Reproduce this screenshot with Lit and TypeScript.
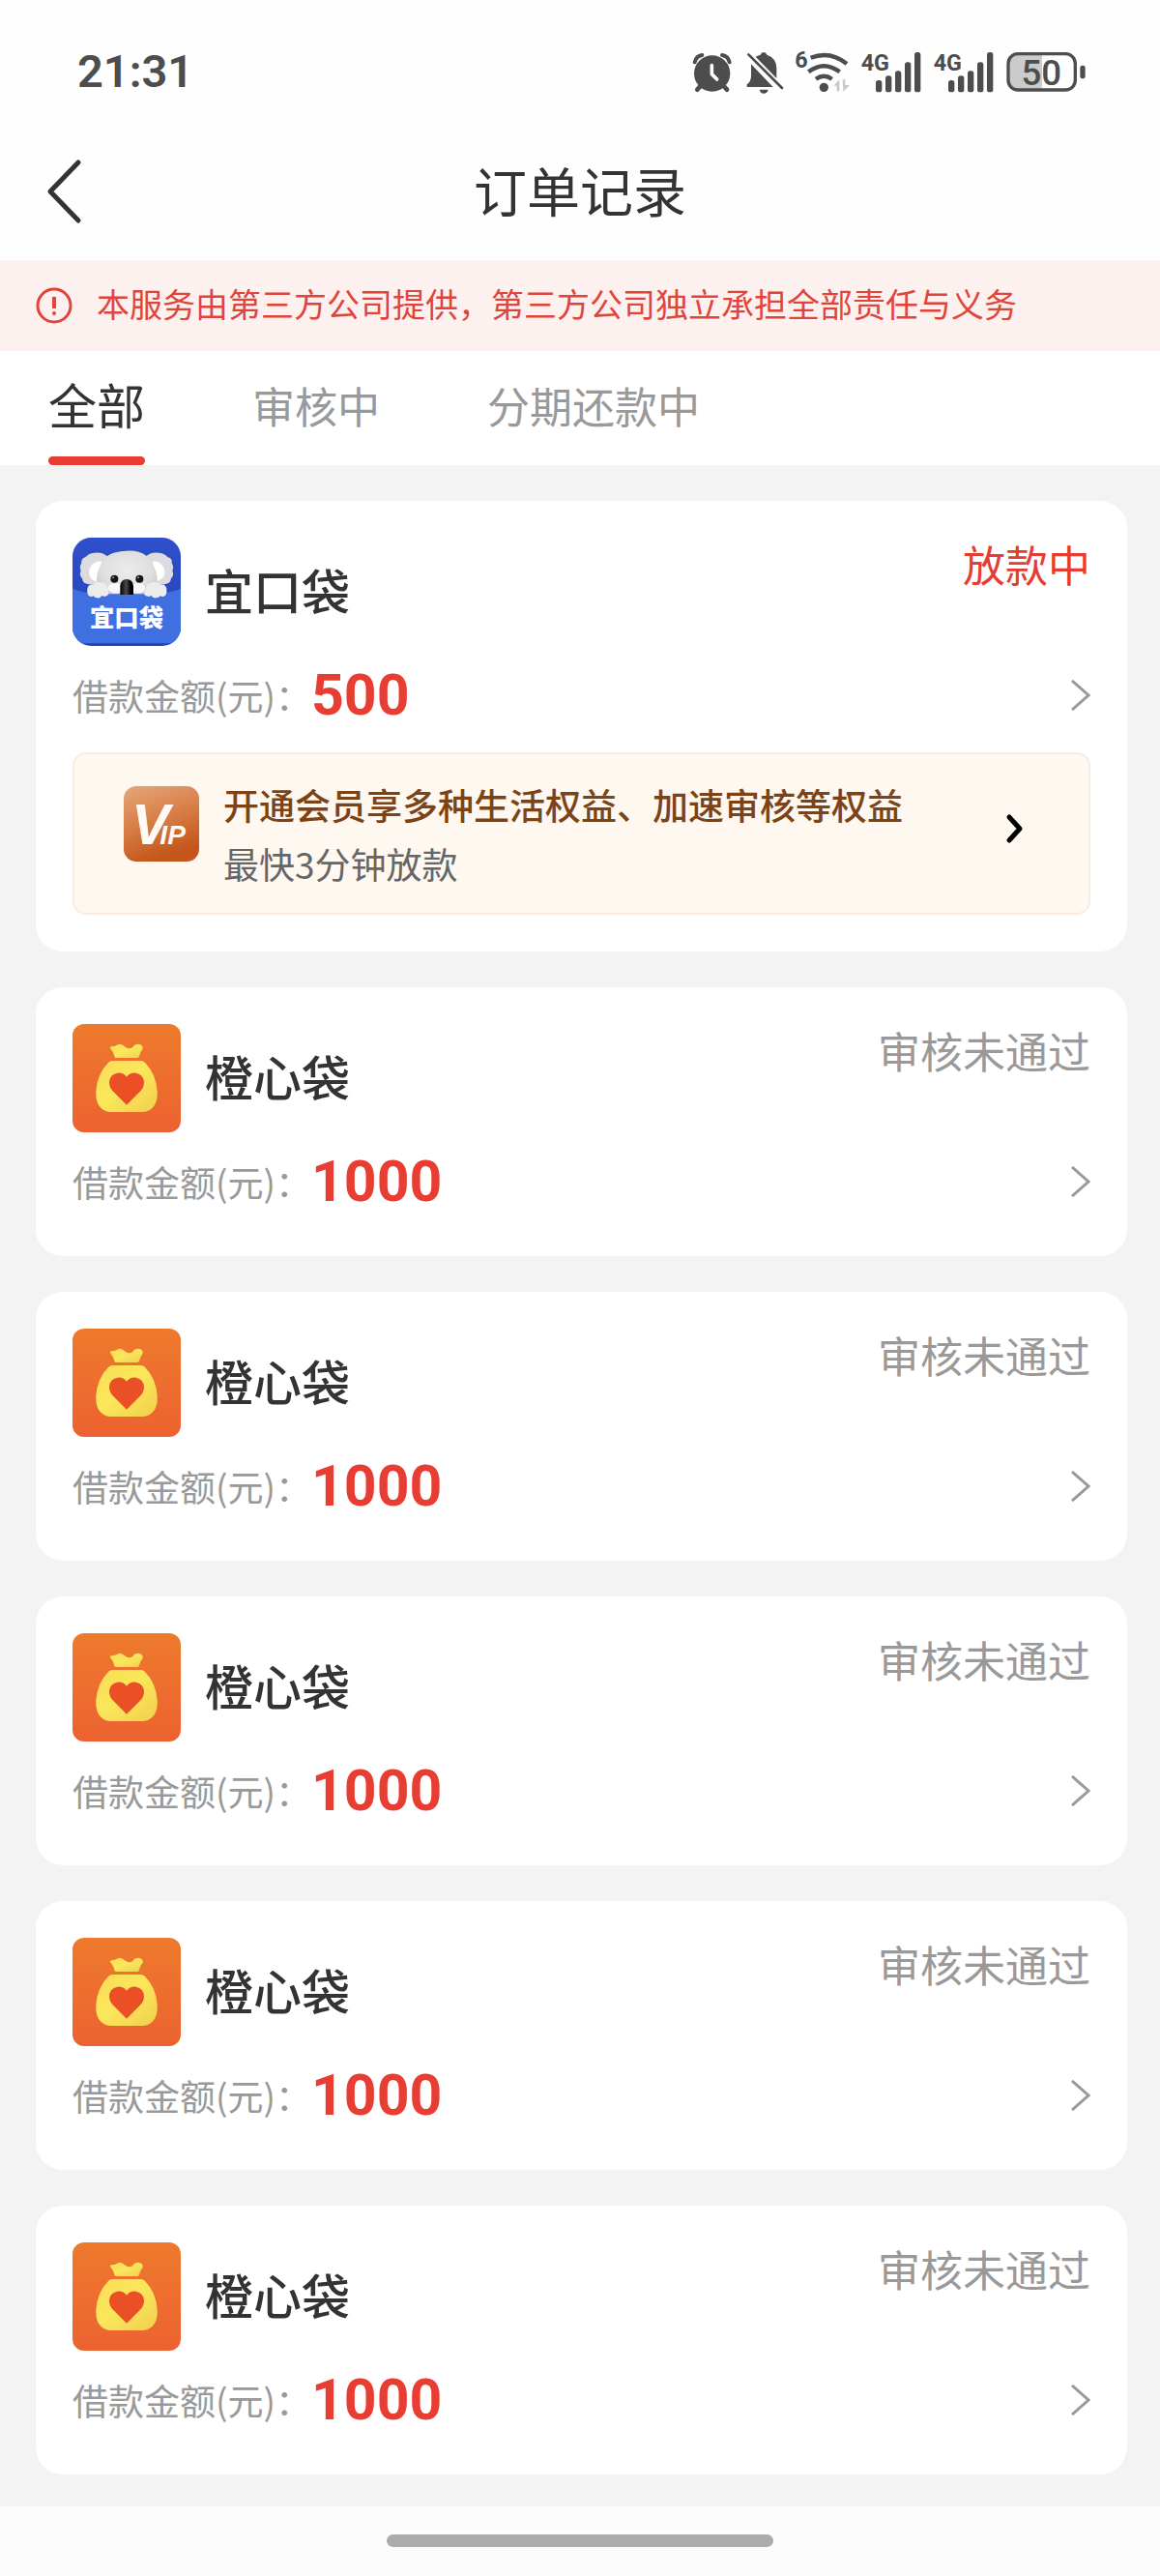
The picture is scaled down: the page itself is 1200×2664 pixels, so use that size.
import { LitElement, html, css, svg, nothing } from "lit";
import { customElement, property, state } from "lit/decorators.js";
import { classMap } from "lit/directives/class-map.js";

interface Order {
  logo: "koala" | "bag";
  name: string;
  amount: string;
  status: string;
  active?: boolean;
  vip?: boolean;
}

const rejected: Order = { logo: "bag", name: "橙心袋", amount: "1000", status: "审核未通过" };

const orders: Order[] = [
  { logo: "koala", name: "宜口袋", amount: "500", status: "放款中", active: true, vip: true },
  ...Array.from({ length: 5 }, () => ({ ...rejected })),
];

const tabs = ["全部", "审核中", "分期还款中"];

const signalBars = svg`
  <rect x="612" y="155" width="19" height="37" rx="8" />
  <rect x="642" y="141" width="19" height="51" rx="8" />
  <rect x="672" y="126" width="19" height="66" rx="8" />
  <rect x="702" y="99" width="19" height="93" rx="8" />
  <rect x="732" y="68" width="19" height="124" rx="8" />
`;

@customElement("status-bar")
export class StatusBar extends LitElement {
  static styles = css`
    :host {
      display: flex;
      justify-content: space-between;
      align-items: center;
      height: 104px;
      padding: 22px 76px 0 80px;
      color: #4d4d4d;
      font-family: Roboto, sans-serif;
    }
    .time {
      font-size: 47px;
      font-weight: 600;
      line-height: 56px;
    }
    .icons {
      display: flex;
      align-items: center;
      gap: 12px;
    }
    svg {
      display: block;
      height: 44px;
      overflow: visible;
      fill: #4d4d4d;
    }
    .line {
      fill: none;
      stroke: #4d4d4d;
    }
    .net {
      font: 700 70px Roboto, sans-serif;
    }
    .charge {
      font: 500 110px Roboto, sans-serif;
    }
  `;

  private signal() {
    return html`<svg width="63" viewBox="567 62 189 132" role="img" aria-label="4G">
      <text class="net" x="566" y="125">4G</text>
      ${signalBars}
    </svg>`;
  }

  render() {
    return html`
      <span class="time">21:31</span>
      <div class="icons">
        <svg width="44" viewBox="45 62 132 132" aria-hidden="true">
          <circle cx="107" cy="134" r="56" />
          <path class="line" stroke-width="12" stroke-linecap="round"
            d="M53 99 C56 86 64 79 76 77 M161 99 C158 86 150 79 138 77" />
          <path class="line" stroke-width="14" stroke-linecap="round" d="M72 172 L61 184 M142 172 L153 184" />
          <path fill="none" stroke="#fff" stroke-width="11" stroke-linecap="round" stroke-linejoin="round"
            d="M106 109 L106 136 L122 152" />
        </svg>
        <svg width="39" viewBox="213 62 117 132" aria-hidden="true">
          <path d="M228 105 L296 176 L215 176 L215 168 Q228 158 228 142 Z" />
          <path d="M242 82 Q250 78 257 76 Q259 68 267 68 Q275 68 277 76 Q307 86 307 118 L307 149 Z" />
          <path d="M254 184 L281 184 Q278 196 267 196 Q257 196 254 184 Z" />
          <path class="line" stroke-width="8" stroke-linecap="round" d="M220 75 L324 179" />
        </svg>
        <svg width="56" viewBox="366 62 168 132" role="img" aria-label="Wi-Fi 6">
          <text class="net" x="364" y="117">6</text>
          <circle cx="454" cy="177" r="14" />
          <path class="line" stroke-width="13"
            d="M429 151 Q454 133 479 151 M406 129 Q454 92 503 129 M413 85 Q474 62 525 104" />
          <path fill="#c8c8c8" d="M484 172 L502 153 V189 H494 V172 Z M512 153 H520 V170 H534 L514 190 Z" />
        </svg>
        ${this.signal()} ${this.signal()}
        <svg width="83" viewBox="1023 62 249 132" role="img" aria-label="50%">
          <path fill="#cbcbcb" d="M1060 73 H1134 V185 H1060 Q1030 185 1030 155 V103 Q1030 73 1060 73 Z" />
          <rect class="line" x="1029" y="73" width="208" height="112" rx="30" stroke-width="10" />
          <rect x="1252" y="109" width="16" height="41" rx="7" />
          <text class="charge" x="1132" y="170" text-anchor="middle">50</text>
        </svg>
      </div>
    `;
  }
}

@customElement("product-logo")
export class ProductLogo extends LitElement {
  @property() kind = "bag";

  static styles = css`
    :host {
      display: block;
      flex: none;
      width: 112px;
      height: 112px;
    }
    svg {
      display: block;
      width: 100%;
      height: 100%;
    }
    .brand {
      font: 900 76px "Noto Sans CJK SC", sans-serif;
      fill: #fff;
    }
  `;

  private koala() {
    return html`<svg viewBox="30 33 336 336" role="img" aria-label="宜口袋">
      <defs>
        <clipPath id="tile"><rect x="30" y="33" width="336" height="336" rx="58" /></clipPath>
        <linearGradient id="sky" x1="0" y1="0" x2="0" y2="1">
          <stop offset="0" stop-color="#2f50cc" /><stop offset="1" stop-color="#2441b4" />
        </linearGradient>
        <radialGradient id="fur" cx="50%" cy="42%" r="60%">
          <stop offset="0" stop-color="#ececec" /><stop offset="0.7" stop-color="#dfdfdf" />
          <stop offset="1" stop-color="#c9c9cb" />
        </radialGradient>
        <linearGradient id="nose" x1="0" y1="0" x2="1" y2="0">
          <stop offset="0" stop-color="#000" /><stop offset="0.45" stop-color="#4a4a4a" />
          <stop offset="0.8" stop-color="#000" />
        </linearGradient>
      </defs>
      <g clip-path="url(#tile)">
        <rect x="30" y="33" width="336" height="336" fill="url(#sky)" />
        <path fill="#dcdcde"
          d="M140 92 Q122 76 98 80 Q78 82 70 94 Q56 98 58 112 Q50 124 56 136 Q50 150 60 160 Q62 176 80 178 L150 180 Z" />
        <path fill="#dcdcde"
          d="M256 92 Q274 76 298 80 Q318 82 326 94 Q341 98 338 112 Q346 124 340 136 Q346 150 336 160 Q334 176 316 178 L246 180 Z" />
        <path fill="#fff" d="M121 107 Q98 104 86 124 Q74 150 92 164 L112 172 Z" />
        <path fill="#fff" d="M279 107 Q300 104 312 124 Q322 146 308 160 L286 172 Z" />
        <path fill="url(#fur)"
          d="M198 74 C250 72 270 92 286 130 C298 158 294 196 276 214 L120 214 C104 196 100 158 112 130 C126 92 146 76 198 74 Z" />
        <ellipse cx="164" cy="190" rx="24" ry="16" fill="#fff" opacity="0.8" />
        <ellipse cx="232" cy="190" rx="24" ry="16" fill="#fff" opacity="0.8" />
        <path fill="#406fe2" d="M30 191 Q60 204 110 208 H286 Q336 204 366 191 V330 Q362 361 320 361 H76 Q34 361 30 330 Z" />
        <circle cx="160" cy="161" r="12" fill="#161616" />
        <circle cx="238" cy="161" r="12" fill="#161616" />
        <circle cx="156" cy="157" r="3" fill="#999" />
        <circle cx="234" cy="157" r="3" fill="#999" />
        <path fill="url(#nose)" d="M178 210 V182 Q180 163 198 162 Q218 163 219 184 V210 Z" />
        <path fill="#ececec"
          d="M76 204 Q72 176 96 178 Q104 166 118 172 Q140 172 140 192 Q146 210 136 214 Q126 218 122 212 Q116 222 106 220 Q98 220 96 214 Q80 220 76 204 Z" />
        <path fill="#ececec"
          d="M322 204 Q326 176 302 178 Q294 166 280 172 Q258 172 258 192 Q246 208 258 214 Q270 218 274 212 Q280 222 290 220 Q300 220 302 214 Q318 220 322 204 Z" />
        <text class="brand" x="198" y="310" text-anchor="middle">宜口袋</text>
      </g>
    </svg>`;
  }

  private bag() {
    return html`<svg viewBox="45 42 336 336" role="img" aria-label="橙心袋">
      <defs>
        <linearGradient id="tile" x1="0" y1="0" x2="0" y2="1">
          <stop offset="0" stop-color="#ee7a2d" /><stop offset="1" stop-color="#ec6230" />
        </linearGradient>
        <linearGradient id="gold" x1="0" y1="0" x2="1" y2="1">
          <stop offset="0" stop-color="#f8dc55" /><stop offset="0.45" stop-color="#fbe75c" />
          <stop offset="1" stop-color="#f1cf4c" />
        </linearGradient>
      </defs>
      <rect x="45" y="42" width="336" height="336" rx="36" fill="url(#tile)" />
      <path fill="url(#gold)"
        d="M162 117 Q160 113 166 112 Q178 112 186 106 Q196 101 207 112 Q220 123 233 113 Q237 104 249 104 Q266 106 263 120 Q254 130 252 142 Q251 147 246 147 H180 Q175 147 175 142 Q172 128 162 117 Z" />
      <path fill="url(#gold)"
        d="M168 156 H258 Q264 156 270 162 Q304 196 308 250 Q311 300 276 313 Q270 315 262 315 H164 Q156 315 150 313 Q115 300 118 250 Q122 196 156 162 Q162 156 168 156 Z" />
      <path fill="#ea4f26"
        d="M213 293 L172 252 Q159 240 159 223 Q160 199 184 194 Q202 192 213 206 Q224 192 242 194 Q266 199 267 223 Q267 240 254 252 Z" />
    </svg>`;
  }

  render() {
    return this.kind === "koala" ? this.koala() : this.bag();
  }
}

@customElement("order-card")
export class OrderCard extends LitElement {
  @property({ attribute: false }) order: Order = rejected;

  static styles = css`
    :host {
      display: block;
      padding: 38px;
      border-radius: 28px;
      background: #fff;
    }
    .head {
      display: flex;
      align-items: center;
      gap: 25px;
    }
    .name {
      flex: 1;
      margin: 0;
      padding-bottom: 6px;
      color: #333;
      font-size: 50px;
      font-weight: 500;
      line-height: 60px;
    }
    .status {
      align-self: flex-start;
      color: #999;
      font-size: 44px;
      line-height: 54px;
    }
    .status.active {
      color: #e63c33;
    }
    .detail {
      display: flex;
      align-items: center;
      width: 100%;
      height: 78px;
      margin-top: 12px;
      padding: 0;
      border: 0;
      background: none;
      color: #999;
      font: inherit;
      text-align: left;
      cursor: pointer;
    }
    .label {
      font-size: 37px;
      line-height: 60px;
    }
    .amount {
      flex: 1;
      color: #e83d33;
      font-family: Roboto, sans-serif;
      font-size: 59px;
      font-weight: 700;
      line-height: 72px;
    }
    svg {
      display: block;
      flex: none;
    }
    .vip {
      display: flex;
      align-items: flex-start;
      gap: 25px;
      margin-top: 20px;
      padding: 22px 66px 20px 51px;
      border: 2px solid #faebe1;
      border-radius: 14px;
      background: #fef8f1;
      color: #666;
      font-size: 37px;
      line-height: 61px;
      text-decoration: none;
    }
    .badge {
      margin-top: 11px;
    }
    .pitch {
      flex: 1;
    }
    .benefit {
      display: block;
      color: #7d4315;
      font-weight: 500;
    }
    .go {
      margin-top: 39px;
    }
    .mark {
      font: italic 700 59px "Liberation Sans", sans-serif;
      fill: #fffaf3;
    }
    .small {
      font-size: 28px;
    }
  `;

  private vip() {
    return html`<a class="vip" href="#vip">
      <svg class="badge" width="78" height="78" viewBox="0 0 78 78" role="img" aria-label="VIP">
        <defs>
          <linearGradient id="copper" x1="0" y1="0" x2="0.35" y2="1">
            <stop offset="0" stop-color="#e5a77a" /><stop offset="0.55" stop-color="#d77c45" />
            <stop offset="1" stop-color="#c4561b" />
          </linearGradient>
        </defs>
        <rect width="78" height="78" rx="13" fill="url(#copper)" />
        <text class="mark" x="8" y="60">V<tspan class="small" dx="-10">IP</tspan></text>
      </svg>
      <span class="pitch">
        <span class="benefit">开通会员享多种生活权益、加速审核等权益</span>
        最快3分钟放款
      </span>
      <svg class="go" width="20" height="32" viewBox="0 0 20 32" aria-hidden="true">
        <path d="M4 4 L15 16 L4 28" fill="none" stroke="#000" stroke-width="5" stroke-linecap="round" stroke-linejoin="round" />
      </svg>
    </a>`;
  }

  render() {
    const o = this.order;
    return html`
      <div class="head">
        <product-logo kind=${o.logo}></product-logo>
        <h2 class="name">${o.name}</h2>
        <span class=${classMap({ status: true, active: !!o.active })}>${o.status}</span>
      </div>
      <button class="detail" type="button">
        <span class="label">借款金额(元)：</span>
        <span class="amount">${o.amount}</span>
        <svg width="20" height="32" viewBox="0 0 20 32" aria-hidden="true">
          <path d="M1 1 L18 16 L1 31" fill="none" stroke="#999" stroke-width="3" />
        </svg>
      </button>
      ${o.vip ? this.vip() : nothing}
    `;
  }
}

@customElement("app-root")
export class AppRoot extends LitElement {
  @state() private current = 0;

  static styles = css`
    :host {
      display: flex;
      flex-direction: column;
      min-height: 100vh;
      background: #f3f3f3;
      color: #333;
      font-family: "Noto Sans CJK SC", sans-serif;
    }
    .top {
      background: #fefefe;
    }
    .nav {
      display: grid;
      grid-template-columns: 1fr auto 1fr;
      align-items: center;
      height: 143px;
      padding: 0 46px;
    }
    .back {
      justify-self: start;
      display: block;
      padding: 0;
      border: 0;
      background: none;
      cursor: pointer;
    }
    .back svg {
      display: block;
    }
    .title {
      margin: 0;
      padding-bottom: 6px;
      font-size: 55px;
      font-weight: 400;
      line-height: 72px;
    }
    .notice {
      display: flex;
      align-items: center;
      gap: 24px;
      min-height: 94px;
      padding: 0 37px;
      background: #fdf1f0;
      color: #e0443b;
      font-size: 34px;
      line-height: 48px;
    }
    .notice svg {
      flex: none;
    }
    .notice p {
      margin: 0;
      padding-bottom: 4px;
    }
    .tabs {
      display: flex;
      gap: 111px;
      padding: 0 50px;
      background: #fff;
    }
    .tab {
      display: flex;
      flex-direction: column;
      align-items: stretch;
      height: 118px;
      padding: 0;
      border: 0;
      background: none;
      color: #999;
      font: inherit;
      font-size: 44px;
      line-height: 112px;
      cursor: pointer;
    }
    .tab.on {
      color: #333;
      font-size: 50px;
      line-height: 109px;
    }
    .tab.on::after {
      content: "";
      height: 9px;
      border-radius: 5px;
      background: #e83d33;
    }
    .list {
      flex: 1;
      display: flex;
      flex-direction: column;
      gap: 37px;
      padding: 37px 34px 33px 37px;
    }
    .home {
      display: flex;
      justify-content: center;
      padding: 29px 0 30px;
      background: #fcfcfc;
    }
    .pill {
      width: 400px;
      height: 13px;
      border-radius: 7px;
      background: #ababab;
    }
  `;

  render() {
    return html`
      <header class="top">
        <status-bar></status-bar>
        <div class="nav">
          <button class="back" type="button" aria-label="返回">
            <svg width="40" height="68" viewBox="0 0 40 68">
              <path d="M35 4 L6 34 L35 64" fill="none" stroke="#333" stroke-width="5" stroke-linecap="round" stroke-linejoin="round" />
            </svg>
          </button>
          <h1 class="title">订单记录</h1>
        </div>
      </header>
      <div class="notice" role="note">
        <svg width="39" height="39" viewBox="0 0 39 39" aria-hidden="true">
          <circle cx="19" cy="19" r="17" fill="none" stroke="#e0443b" stroke-width="3" />
          <path d="M19 10 V22" stroke="#e0443b" stroke-width="4" />
          <circle cx="19" cy="27" r="2" fill="#e0443b" />
        </svg>
        <p>本服务由第三方公司提供，第三方公司独立承担全部责任与义务</p>
      </div>
      <nav class="tabs" role="tablist">
        ${tabs.map(
          (t, i) => html`<button
            type="button"
            role="tab"
            aria-selected=${i === this.current ? "true" : "false"}
            class=${classMap({ tab: true, on: i === this.current })}
            @click=${() => (this.current = i)}
          >${t}</button>`,
        )}
      </nav>
      <main class="list">
        ${orders.map((o) => html`<order-card .order=${o}></order-card>`)}
      </main>
      <footer class="home"><div class="pill"></div></footer>
    `;
  }
}
